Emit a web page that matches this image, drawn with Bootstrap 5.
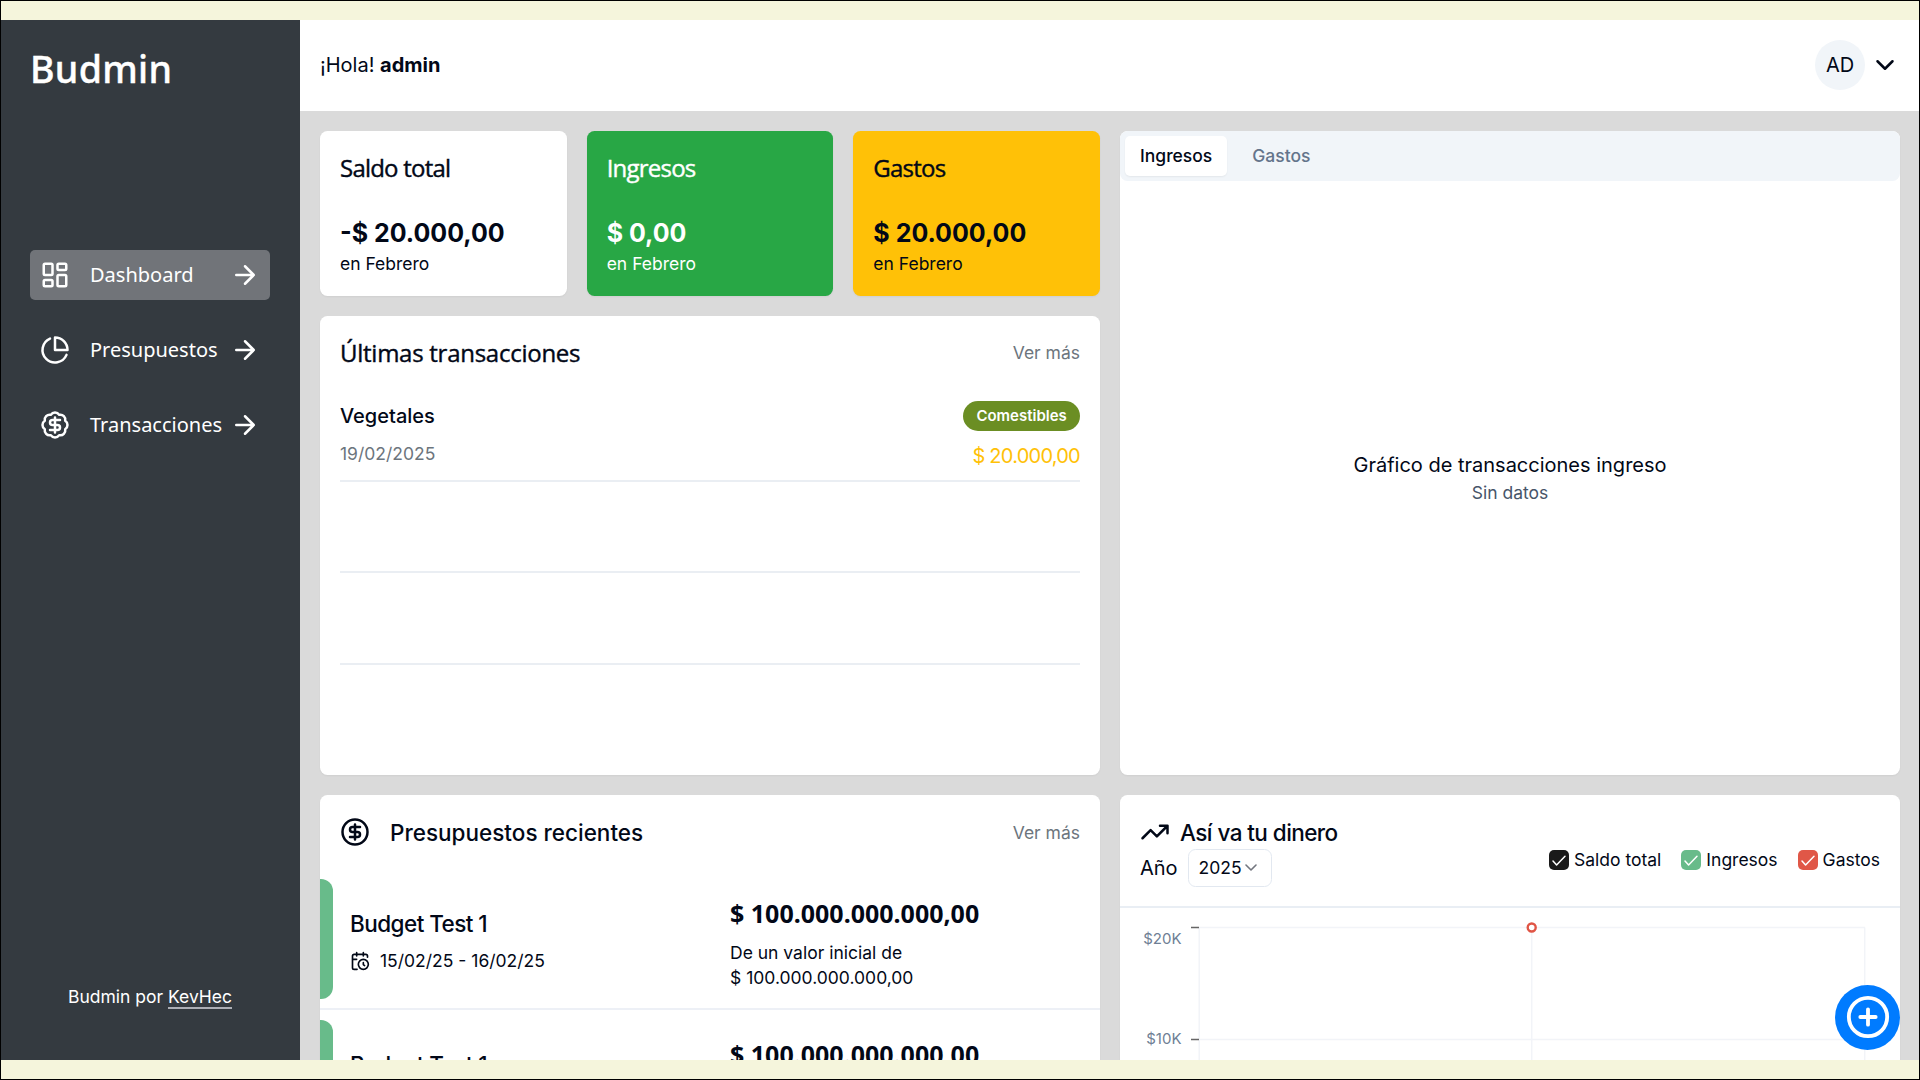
<!DOCTYPE html>
<html lang="es">
<head>
<meta charset="utf-8">
<meta name="viewport" content="width=device-width, initial-scale=1">
<title>Budmin</title>
<link href="https://cdn.jsdelivr.net/npm/bootstrap@5.3.0/dist/css/bootstrap.min.css" rel="stylesheet">
<style>
/* 1rem = 20px, so every Bootstrap spacer scales with the interface */
html { font-size: 20px; }
body { font-family: Inter, sans-serif; color: #020817; background: #f5f5dc; margin: 0; }
svg { display: block; flex: none; }
.ico { fill: none; stroke: currentColor; stroke-width: 2; stroke-linecap: round; stroke-linejoin: round; }
.thin { stroke-width: 1.5; }
.frame { width: 1920px; height: 1080px; border: 1px solid #000; padding: 19px 0; overflow: hidden; }
.shell { height: 1040px; overflow: hidden; background: #dadada; }

.side { width: 299px; background: #343a40; padding: 24px 30px 0 29px; }
.brand { font: 500 37.5px/50px "Noto Sans", "Open Sans", sans-serif; letter-spacing: .3px; height: 206.4px; -webkit-text-stroke: .4px; }
.side .nav { gap: 25px; }
.side .nav-link { font-family: "Noto Sans", "Open Sans", sans-serif; color: #fff; height: 50px; padding: 0 10px; line-height: 30px; border-radius: 5px; }
.side .nav-link span { margin-left: 20px; }
.side .nav-link.active { background: #717479; }
.credit { font-size: 17.5px; line-height: 25px; margin-bottom: 51px; }
.credit a { color: inherit; text-decoration: none; border-bottom: 2px solid #adafb6; }

.topbar { height: 91px; padding: 0 19px 1px 20px; background: #fff; flex: none; }
.avatar { width: 50px; height: 50px; background: #f1f5f9; margin-right: 5px; }

.board { display: grid; grid-template-columns: 780px 780px; gap: 20px; padding: 20px 19px 0 20px; }
.panel { background: #fff; border-radius: 7.5px; box-shadow: 0 1px 2px rgba(0,0,0,.05); overflow: hidden; }
.upper { height: 644px; gap: 20px; }
.lower { height: 500px; }

.stat { flex: 1 1 0; height: 165px; padding: 20px; }
.stat h2 { font: 500 24px/34px "Open Sans", sans-serif; letter-spacing: -.78px; margin: 0 0 31px; -webkit-text-stroke: .4px; }
.stat strong { font-size: 25px; line-height: 35px; }
.stat span { font-size: 17.5px; line-height: 25px; }
.stat-in { background: #28a745; color: #fff; }
.stat-out { background: #ffc107; }

.txt-sm { font-size: 17.5px; line-height: 25px; }
.more { color: #6c757d; font-size: 17.5px; line-height: 25px; text-decoration: none; }
.tx-panel { flex: 1; padding: 19px 20px 20px; }
.tx-panel h2 { font: 500 24px/35px "Open Sans", sans-serif; letter-spacing: -.26px; margin: 0; -webkit-text-stroke: .4px; }
.tx-row { height: 91.5px; border-bottom: 2px solid #eaeef3; padding-top: 10.5px; }
.tx-row:last-child { border-bottom: 0; }
.tx-name { font-weight: 500; line-height: 30px; }
.tx-date { color: #6c757d; margin-top: 10px; }
.tag { background: #6b8e23; color: #fff; font-size: 15px; font-weight: 600; line-height: 20px; height: 30px; padding: 5px 13.2px; }
.tx-amount { color: #ffc107; line-height: 30px; letter-spacing: -.75px; margin-top: 10px; }

.tabbar { background: #f1f5f9; height: 50px; padding: 5px; border-radius: 7.5px; }
.tab { font-size: 17.5px; font-weight: 500; line-height: 40px; height: 40px; padding: 0 15px; border-radius: 5px; color: #64748b; }
.tab.on { background: #fff; color: #020817; box-shadow: 0 1px 2px rgba(0,0,0,.06); margin-right: 10px; }
.empty { padding-top: 269px; line-height: 30px; }
.empty small { font-size: 17.5px; line-height: 25px; color: #475569; display: block; }

.sec-title { font-size: 22.5px; font-weight: 500; line-height: 30px; margin: 1px 0 0; }
.bud-head { padding: 22px 20px; height: 74px; gap: 20px; }
.bud-head .more { margin-top: 3px; }
.bud-row { height: 141.25px; padding: 10px 0; border-bottom: 2px solid #edf0f6; }
.bud-bar { width: 13px; height: 120px; background: #68bb8a; border-radius: 0 12px 12px 0; flex: none; }
.bud-info { width: 397px; padding-left: 17px; }
.bud-name { font-size: 22.5px; font-weight: 500; line-height: 35px; letter-spacing: -.55px; margin-top: 27px; }
.bud-dates { gap: 10px; margin-top: 7px; }
.bud-total { font: 700 25px/35px "Noto Sans", sans-serif; margin: 16.5px 0 9px; }

.money-head { height: 113px; padding: 22px 20px 0; border-bottom: 2px solid #e9eef4; }
.money-head .sec-title { letter-spacing: -.025em; }
.year-row { gap: 10px; margin-top: 1px; }
.year { border: 1.5px solid #e2e8f0; border-radius: 7.5px; width: 84px; height: 38px; padding: 0 9px 0 10px; font-size: 17.5px; }
.caret { stroke-width: 1.6; opacity: .55; margin-left: -1px; }
.legend { margin-top: 30px; gap: 20px; }
.check { width: 20px; height: 20px; border-radius: 5px; margin-right: 5px; color: #fff; }
.c-total { background: #1a1a1a; } .c-in { background: #68bb8a; } .c-out { background: #e05747; }
.chart text { font: 15px Inter, sans-serif; fill: #6f7f95; }

.fab { right: 20px; bottom: 30.5px; width: 65px; height: 65px; background: #007bff; color: #fff; border: 0; padding: 0; }
</style>
</head>
<body>
<div class="frame">
<div class="shell d-flex">

  <aside class="side d-flex flex-column text-white">
    <div class="brand">Budmin</div>
    <nav class="nav flex-column flex-nowrap">
      <a class="nav-link active d-flex align-items-center">
        <svg class="ico" width="30" height="30" viewBox="0 0 24 24"><rect width="7" height="9" x="3" y="3" rx="1"/><rect width="7" height="5" x="14" y="3" rx="1"/><rect width="7" height="9" x="14" y="12" rx="1"/><rect width="7" height="5" x="3" y="16" rx="1"/></svg>
        <span>Dashboard</span>
        <svg class="ico ms-auto" width="30" height="30" viewBox="0 0 24 24"><path d="M5 12h14M12 5l7 7-7 7"/></svg>
      </a>
      <a class="nav-link d-flex align-items-center">
        <svg class="ico" width="30" height="30" viewBox="0 0 24 24"><path d="M21.21 15.89A10 10 0 1 1 8 2.83"/><path d="M22 12A10 10 0 0 0 12 2v10z"/></svg>
        <span>Presupuestos</span>
        <svg class="ico ms-auto" width="30" height="30" viewBox="0 0 24 24"><path d="M5 12h14M12 5l7 7-7 7"/></svg>
      </a>
      <a class="nav-link d-flex align-items-center">
        <svg class="ico" width="30" height="30" viewBox="0 0 24 24"><path d="M3.85 8.62a4 4 0 0 1 4.78-4.77 4 4 0 0 1 6.74 0 4 4 0 0 1 4.78 4.78 4 4 0 0 1 0 6.74 4 4 0 0 1-4.77 4.78 4 4 0 0 1-6.75 0 4 4 0 0 1-4.78-4.77 4 4 0 0 1 0-6.76Z"/><path d="M16 8h-6a2 2 0 1 0 0 4h4a2 2 0 1 1 0 4H8M12 18V6"/></svg>
        <span>Transacciones</span>
        <svg class="ico ms-auto" width="30" height="30" viewBox="0 0 24 24"><path d="M5 12h14M12 5l7 7-7 7"/></svg>
      </a>
    </nav>
    <div class="credit mt-auto text-center">Budmin por <a>KevHec</a></div>
  </aside>

  <div class="flex-grow-1 d-flex flex-column">
    <header class="topbar d-flex align-items-center">
      <div>¡Hola! <b>admin</b></div>
      <div class="avatar rounded-circle ms-auto d-flex align-items-center justify-content-center">AD</div>
      <svg class="ico" width="30" height="30" viewBox="0 0 24 24"><path d="m6 9 6 6 6-6"/></svg>
    </header>

    <main class="board">
      <section class="upper d-flex flex-column">
        <div class="d-flex" style="gap:20px">
          <div class="panel stat d-flex flex-column"><h2>Saldo total</h2><strong>-$ 20.000,00</strong><span>en Febrero</span></div>
          <div class="panel stat stat-in d-flex flex-column"><h2>Ingresos</h2><strong>$ 0,00</strong><span>en Febrero</span></div>
          <div class="panel stat stat-out d-flex flex-column"><h2>Gastos</h2><strong>$ 20.000,00</strong><span>en Febrero</span></div>
        </div>
        <div class="panel tx-panel">
          <div class="d-flex justify-content-between align-items-center"><h2>Últimas transacciones</h2><a class="more">Ver más</a></div>
          <div class="pt-3">
            <div class="tx-row d-flex justify-content-between">
              <div><div class="tx-name">Vegetales</div><div class="tx-date txt-sm">19/02/2025</div></div>
              <div class="d-flex flex-column align-items-end"><span class="tag rounded-pill">Comestibles</span><span class="tx-amount">$ 20.000,00</span></div>
            </div>
            <div class="tx-row"></div>
            <div class="tx-row"></div>
            <div class="tx-row"></div>
          </div>
        </div>
      </section>

      <section class="panel upper">
        <div class="tabbar d-flex"><span class="tab on">Ingresos</span><span class="tab">Gastos</span></div>
        <div class="empty text-center">Gráfico de transacciones ingreso<small>Sin datos</small></div>
      </section>

      <section class="panel lower">
        <div class="bud-head d-flex align-items-start">
          <svg class="ico" width="30" height="30" viewBox="0 0 24 24"><circle cx="12" cy="12" r="10"/><path d="M16 8h-6a2 2 0 1 0 0 4h4a2 2 0 1 1 0 4H8M12 18V6"/></svg>
          <h2 class="sec-title">Presupuestos recientes</h2>
          <a class="more ms-auto">Ver más</a>
        </div>
        <div class="bud-row d-flex">
          <div class="bud-bar"></div>
          <div class="bud-info">
            <div class="bud-name">Budget Test 1</div>
            <div class="bud-dates d-flex align-items-center txt-sm">
              <svg class="ico" width="20" height="20" viewBox="0 0 24 24"><path d="M21 7.5V6a2 2 0 0 0-2-2H5a2 2 0 0 0-2 2v14a2 2 0 0 0 2 2h3.5M16 2v4M8 2v4M3 10h5M17.5 17.5 16 16.3V14"/><circle cx="16" cy="16" r="6"/></svg>15/02/25 - 16/02/25</div>
          </div>
          <div><div class="bud-total">$ 100.000.000.000,00</div><div class="txt-sm">De un valor inicial de<br>$ 100.000.000.000,00</div></div>
        </div>
        <div class="bud-row d-flex">
          <div class="bud-bar"></div>
          <div class="bud-info"><div class="bud-name">Budget Test 1</div></div>
          <div><div class="bud-total">$ 100.000.000.000,00</div></div>
        </div>
      </section>

      <section class="panel lower">
        <div class="money-head d-flex justify-content-between align-items-start">
          <div>
            <div class="d-flex gap-2">
              <svg class="ico" width="30" height="30" viewBox="0 0 24 24"><path d="m22 7-8.5 8.5-5-5L2 17M16 7h6v6"/></svg>
              <h2 class="sec-title">Así va tu dinero</h2>
            </div>
            <div class="year-row d-flex align-items-center">
              <span>Año</span>
              <div class="year d-flex align-items-center"><span>2025</span><svg class="ico caret" width="20" height="20" viewBox="0 0 20 20"><path d="m5 7 5 5 5-5"/></svg></div>
            </div>
          </div>
          <div class="legend d-flex txt-sm">
            <label class="d-flex align-items-center"><i class="check c-total"><svg class="ico thin" width="20" height="20" viewBox="0 0 20 20"><path d="m4 11 3.6 4L16 6.2"/></svg></i>Saldo total</label>
            <label class="d-flex align-items-center"><i class="check c-in"><svg class="ico thin" width="20" height="20" viewBox="0 0 20 20"><path d="m4 11 3.6 4L16 6.2"/></svg></i>Ingresos</label>
            <label class="d-flex align-items-center"><i class="check c-out"><svg class="ico thin" width="20" height="20" viewBox="0 0 20 20"><path d="m4 11 3.6 4L16 6.2"/></svg></i>Gastos</label>
          </div>
        </div>
        <svg class="chart" width="780" height="200" viewBox="0 0 780 200">
          <g stroke="#f2f4f8" stroke-width="1.5" fill="none"><path d="M79 19.4h666M79 131.4h666M79.2 19.4V200M411.7 19.4V200M744.7 19.4V200"/></g>
          <path d="M71 19.4h8M71 131.4h8" stroke="#666" stroke-width="1.5"/>
          <text x="61.5" y="36.3" text-anchor="end">$20K</text>
          <text x="61.5" y="136.3" text-anchor="end">$10K</text>
          <circle cx="411.7" cy="19.5" r="4" fill="#fff" stroke="#e05545" stroke-width="2.4"/>
        </svg>
      </section>
    </main>
  </div>
</div>
</div>
<button class="fab position-fixed rounded-circle d-flex align-items-center justify-content-center"><svg class="ico" width="46" height="46" viewBox="0 0 24 24"><circle cx="12" cy="12" r="10"/><path d="M8 12h8M12 8v8"/></svg></button>
<script src="https://cdn.jsdelivr.net/npm/bootstrap@5.3.0/dist/js/bootstrap.bundle.min.js"></script>
</body>
</html>
